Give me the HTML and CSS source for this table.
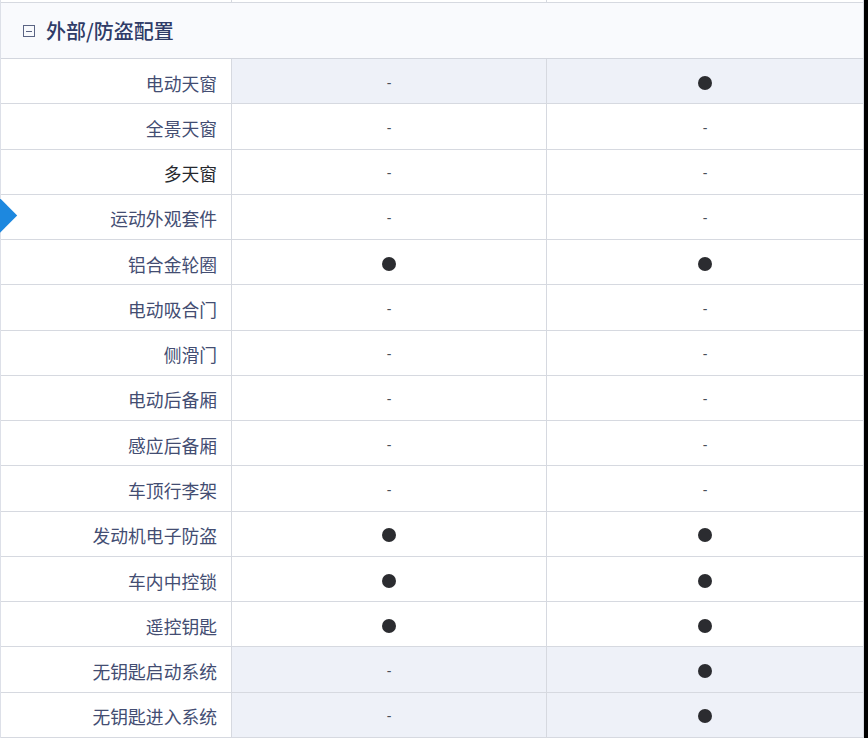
FILE: index.html
```html
<!DOCTYPE html>
<html lang="zh">
<head>
<meta charset="utf-8">
<link rel="stylesheet" href="styles.css">
</head>
<body>
<div class="page">
  <div class="table">
    <div class="strip"><div class="c lbl"></div><div class="c"></div><div class="c"></div></div>
    <div class="head"><span class="minus"></span><span class="title">外部/防盗配置</span></div>
    <div class="row shade"><div class="c lbl">电动天窗</div><div class="c"><span class="dash">-</span></div><div class="c"><span class="dot"></span></div></div>
    <div class="row"><div class="c lbl">全景天窗</div><div class="c"><span class="dash">-</span></div><div class="c"><span class="dash">-</span></div></div>
    <div class="row"><div class="c lbl dark">多天窗</div><div class="c"><span class="dash">-</span></div><div class="c"><span class="dash">-</span></div></div>
    <div class="row"><div class="c lbl">运动外观套件</div><div class="c"><span class="dash">-</span></div><div class="c"><span class="dash">-</span></div></div>
    <div class="row"><div class="c lbl">铝合金轮圈</div><div class="c"><span class="dot"></span></div><div class="c"><span class="dot"></span></div></div>
    <div class="row"><div class="c lbl">电动吸合门</div><div class="c"><span class="dash">-</span></div><div class="c"><span class="dash">-</span></div></div>
    <div class="row"><div class="c lbl">侧滑门</div><div class="c"><span class="dash">-</span></div><div class="c"><span class="dash">-</span></div></div>
    <div class="row"><div class="c lbl">电动后备厢</div><div class="c"><span class="dash">-</span></div><div class="c"><span class="dash">-</span></div></div>
    <div class="row"><div class="c lbl">感应后备厢</div><div class="c"><span class="dash">-</span></div><div class="c"><span class="dash">-</span></div></div>
    <div class="row"><div class="c lbl">车顶行李架</div><div class="c"><span class="dash">-</span></div><div class="c"><span class="dash">-</span></div></div>
    <div class="row"><div class="c lbl">发动机电子防盗</div><div class="c"><span class="dot"></span></div><div class="c"><span class="dot"></span></div></div>
    <div class="row"><div class="c lbl">车内中控锁</div><div class="c"><span class="dot"></span></div><div class="c"><span class="dot"></span></div></div>
    <div class="row"><div class="c lbl">遥控钥匙</div><div class="c"><span class="dot"></span></div><div class="c"><span class="dot"></span></div></div>
    <div class="row shade"><div class="c lbl">无钥匙启动系统</div><div class="c"><span class="dash">-</span></div><div class="c"><span class="dot"></span></div></div>
    <div class="row shade"><div class="c lbl">无钥匙进入系统</div><div class="c"><span class="dash">-</span></div><div class="c"><span class="dot"></span></div></div>
  </div>
  <div class="marker"></div>
</div>
</body>
</html>
```
FILE: styles.css
```css
html, body {
  margin: 0;
  padding: 0;
  background: #000;
}
.page {
  position: relative;
  width: 868px;
  height: 738px;
  overflow: hidden;
  background: #000;
}
.table {
  width: 864px;
  background: #fff;
  font-family: "Noto Sans CJK SC", "Noto Sans", sans-serif;
  border-left: 1px solid #dde0e8;
  box-sizing: border-box;
}
.strip, .row {
  display: grid;
  grid-template-columns: 231px 315px 317px;
}
.strip {
  height: 3px;
}
.strip .c {
  border-bottom: 1px solid #d6d9e0;
  background: #fff;
}
.c {
  box-sizing: border-box;
  border-right: 1px solid #d6d9e0;
  display: flex;
  align-items: center;
  justify-content: center;
}
.head {
  height: 56px;
  box-sizing: border-box;
  border-bottom: 1px solid #d3d6de;
  border-right: 1px solid #d6d9e0;
  background: #f9fafd;
  display: flex;
  align-items: center;
  padding-left: 22px;
  gap: 11px;
}
.minus {
  width: 12px;
  height: 12px;
  border: 1px solid #5b6484;
  position: relative;
  box-sizing: border-box;
  margin-top: 1px;
}
.minus::after {
  content: "";
  position: absolute;
  left: 2px;
  right: 2px;
  top: 4.5px;
  height: 1px;
  background: #5b6484;
}
.title {
  font-size: 20px;
  font-weight: 500;
  color: #2f3b67;
}
.row {
  height: 45.27px;
}
.row .c {
  border-bottom: 1px solid #d6d9e0;
  padding-top: 3px;
}
.lbl {
  justify-content: flex-end;
  padding-right: 14px;
  font-size: 17.8px;
  color: #434d72;
  background: #fff;
}
.lbl.dark {
  color: #26282e;
}
.shade .c:not(.lbl) {
  background: #eef1f8;
}
.dash {
  font-family: "Liberation Sans", sans-serif;
  font-size: 14px;
  color: #4a4e58;
  line-height: 1;
}
.dot {
  width: 14px;
  height: 14px;
  border-radius: 50%;
  background: #2b2c30;
}
.marker {
  position: absolute;
  left: -13px;
  top: 203px;
  width: 25px;
  height: 25px;
  background: #1d88df;
  transform: rotate(45deg);
}
```
